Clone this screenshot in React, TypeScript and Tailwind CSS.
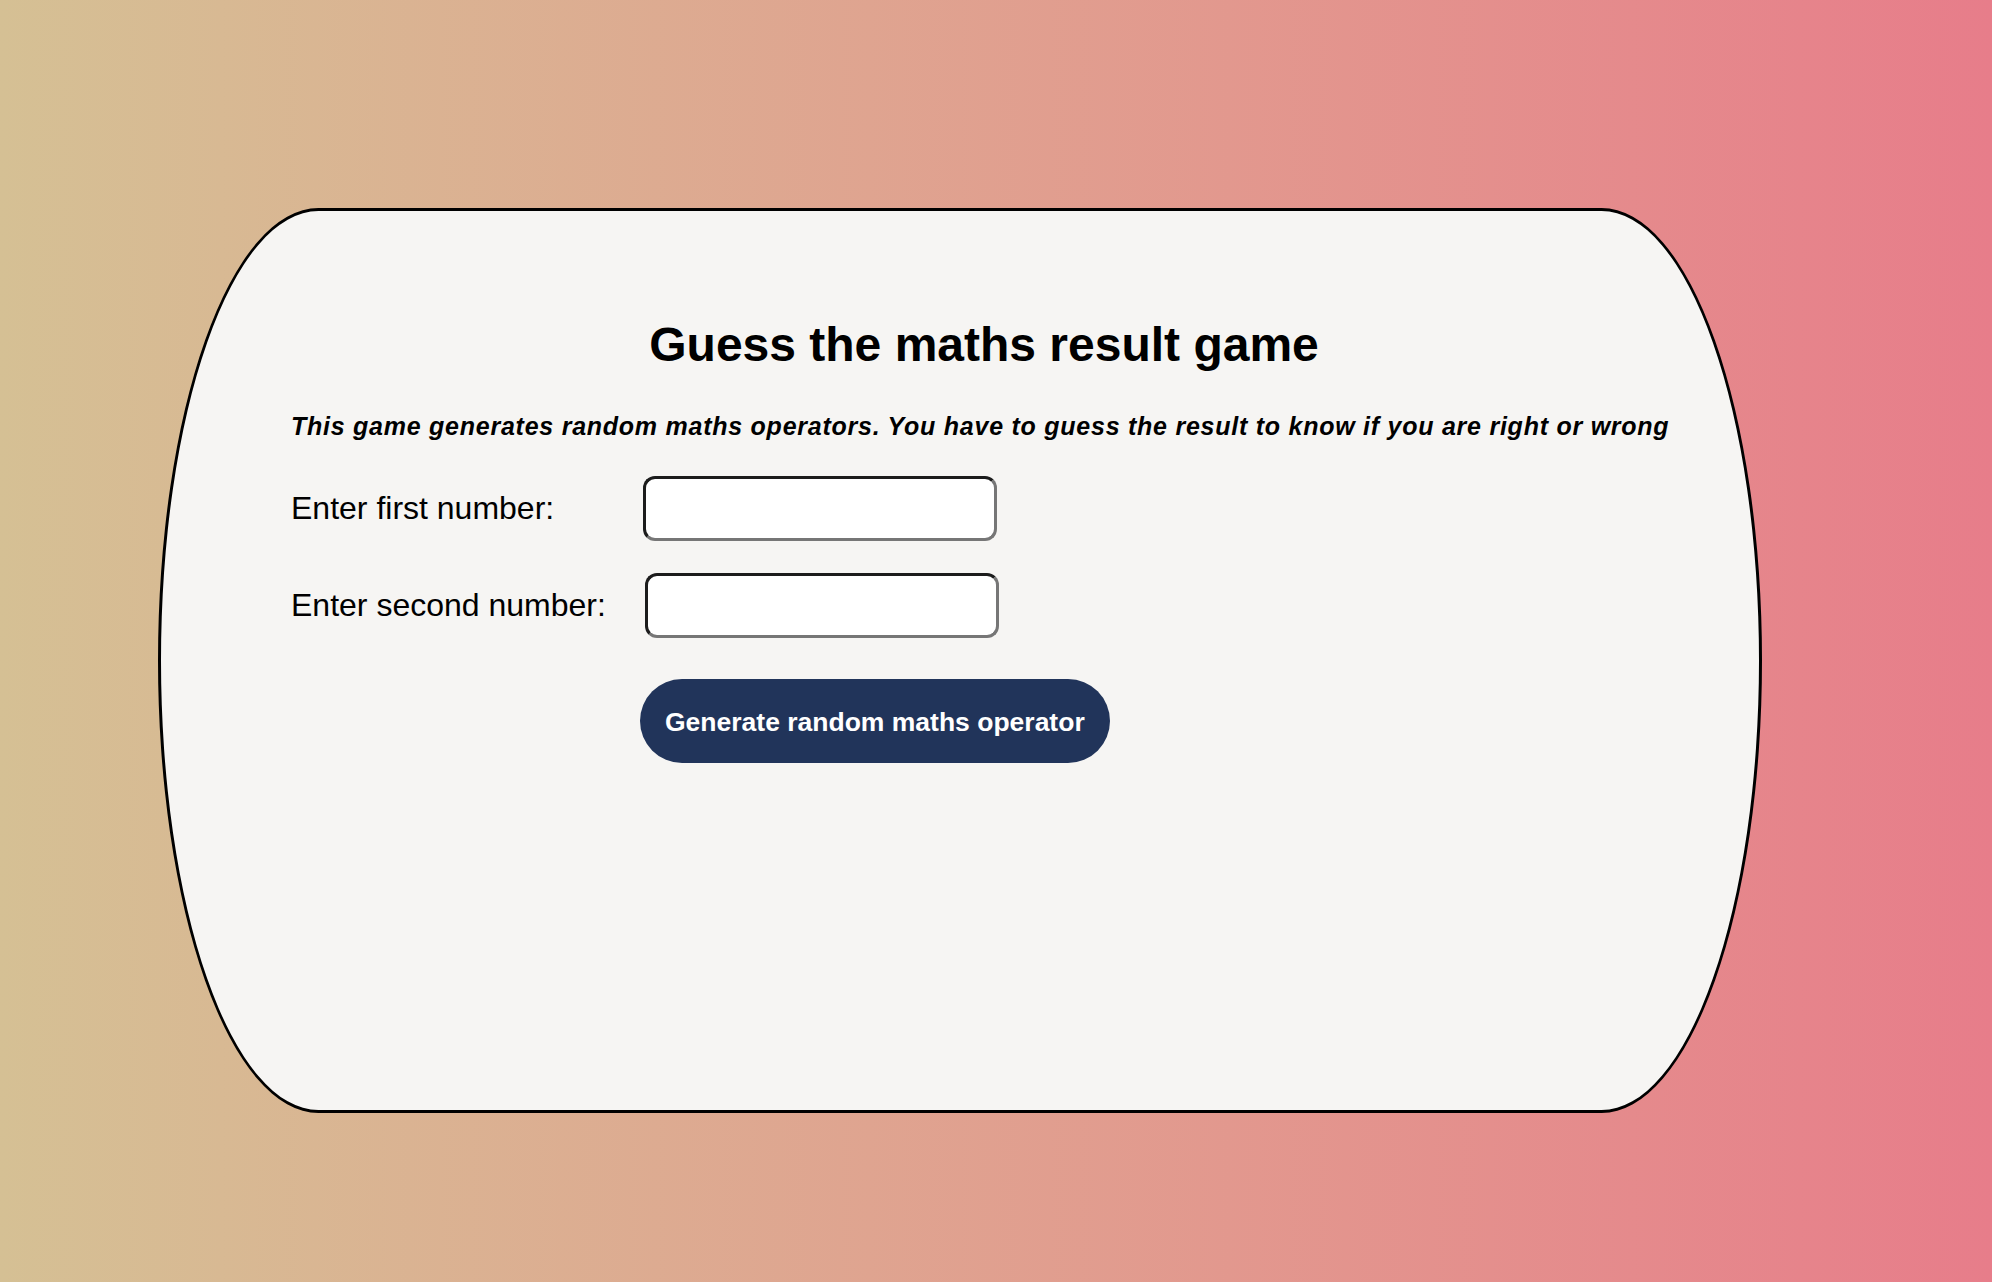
export default function App() {
  return (
    <div className="min-h-[1282px] w-full bg-gradient-to-r from-[#d5c094] to-[#e77d8a] pl-[158px] pt-[208px] font-['Liberation_Sans',Arial,sans-serif] text-black">
      <div className="h-[905px] w-[1604px] rounded-[10%/50%] border-[3px] border-black bg-[#f6f5f3] pl-[130px] pr-[82px] pt-[106px]">
        {/* Title */}
        <h1 className="text-center text-[48px] font-bold leading-[55px]">Guess the maths result game</h1>

        <p className="mt-[41px] whitespace-nowrap text-[25px] font-bold italic leading-[27px] tracking-[0.75px]">
          This game generates random maths operators. You have to guess the result to know if you are right or wrong
        </p>

        {/* Number inputs */}
        <div className="mt-[36px] flex items-center">
          <label className="w-[352px] text-[32px] leading-[37px]">Enter first number:</label>
          <input
            type="number"
            className="h-[65px] w-[354px] rounded-[12px] border-[3px] border-t-[#1c1c1c] border-l-[#1c1c1c] border-b-[#767676] border-r-[#767676] bg-white px-2 text-[24px] outline-none"
          />
        </div>
        <div className="mt-[32px] flex items-center">
          <label className="w-[354px] text-[32px] leading-[37px]">Enter second number:</label>
          <input
            type="number"
            className="h-[65px] w-[354px] rounded-[12px] border-[3px] border-t-[#1c1c1c] border-l-[#1c1c1c] border-b-[#767676] border-r-[#767676] bg-white px-2 text-[24px] outline-none"
          />
        </div>

        <button className="ml-[349px] mt-[41px] h-[84px] rounded-full bg-[#21345a] px-[25px] pt-[3px] text-[26.5px] font-bold text-white">
          Generate random maths operator
        </button>
      </div>
    </div>
  );
}
